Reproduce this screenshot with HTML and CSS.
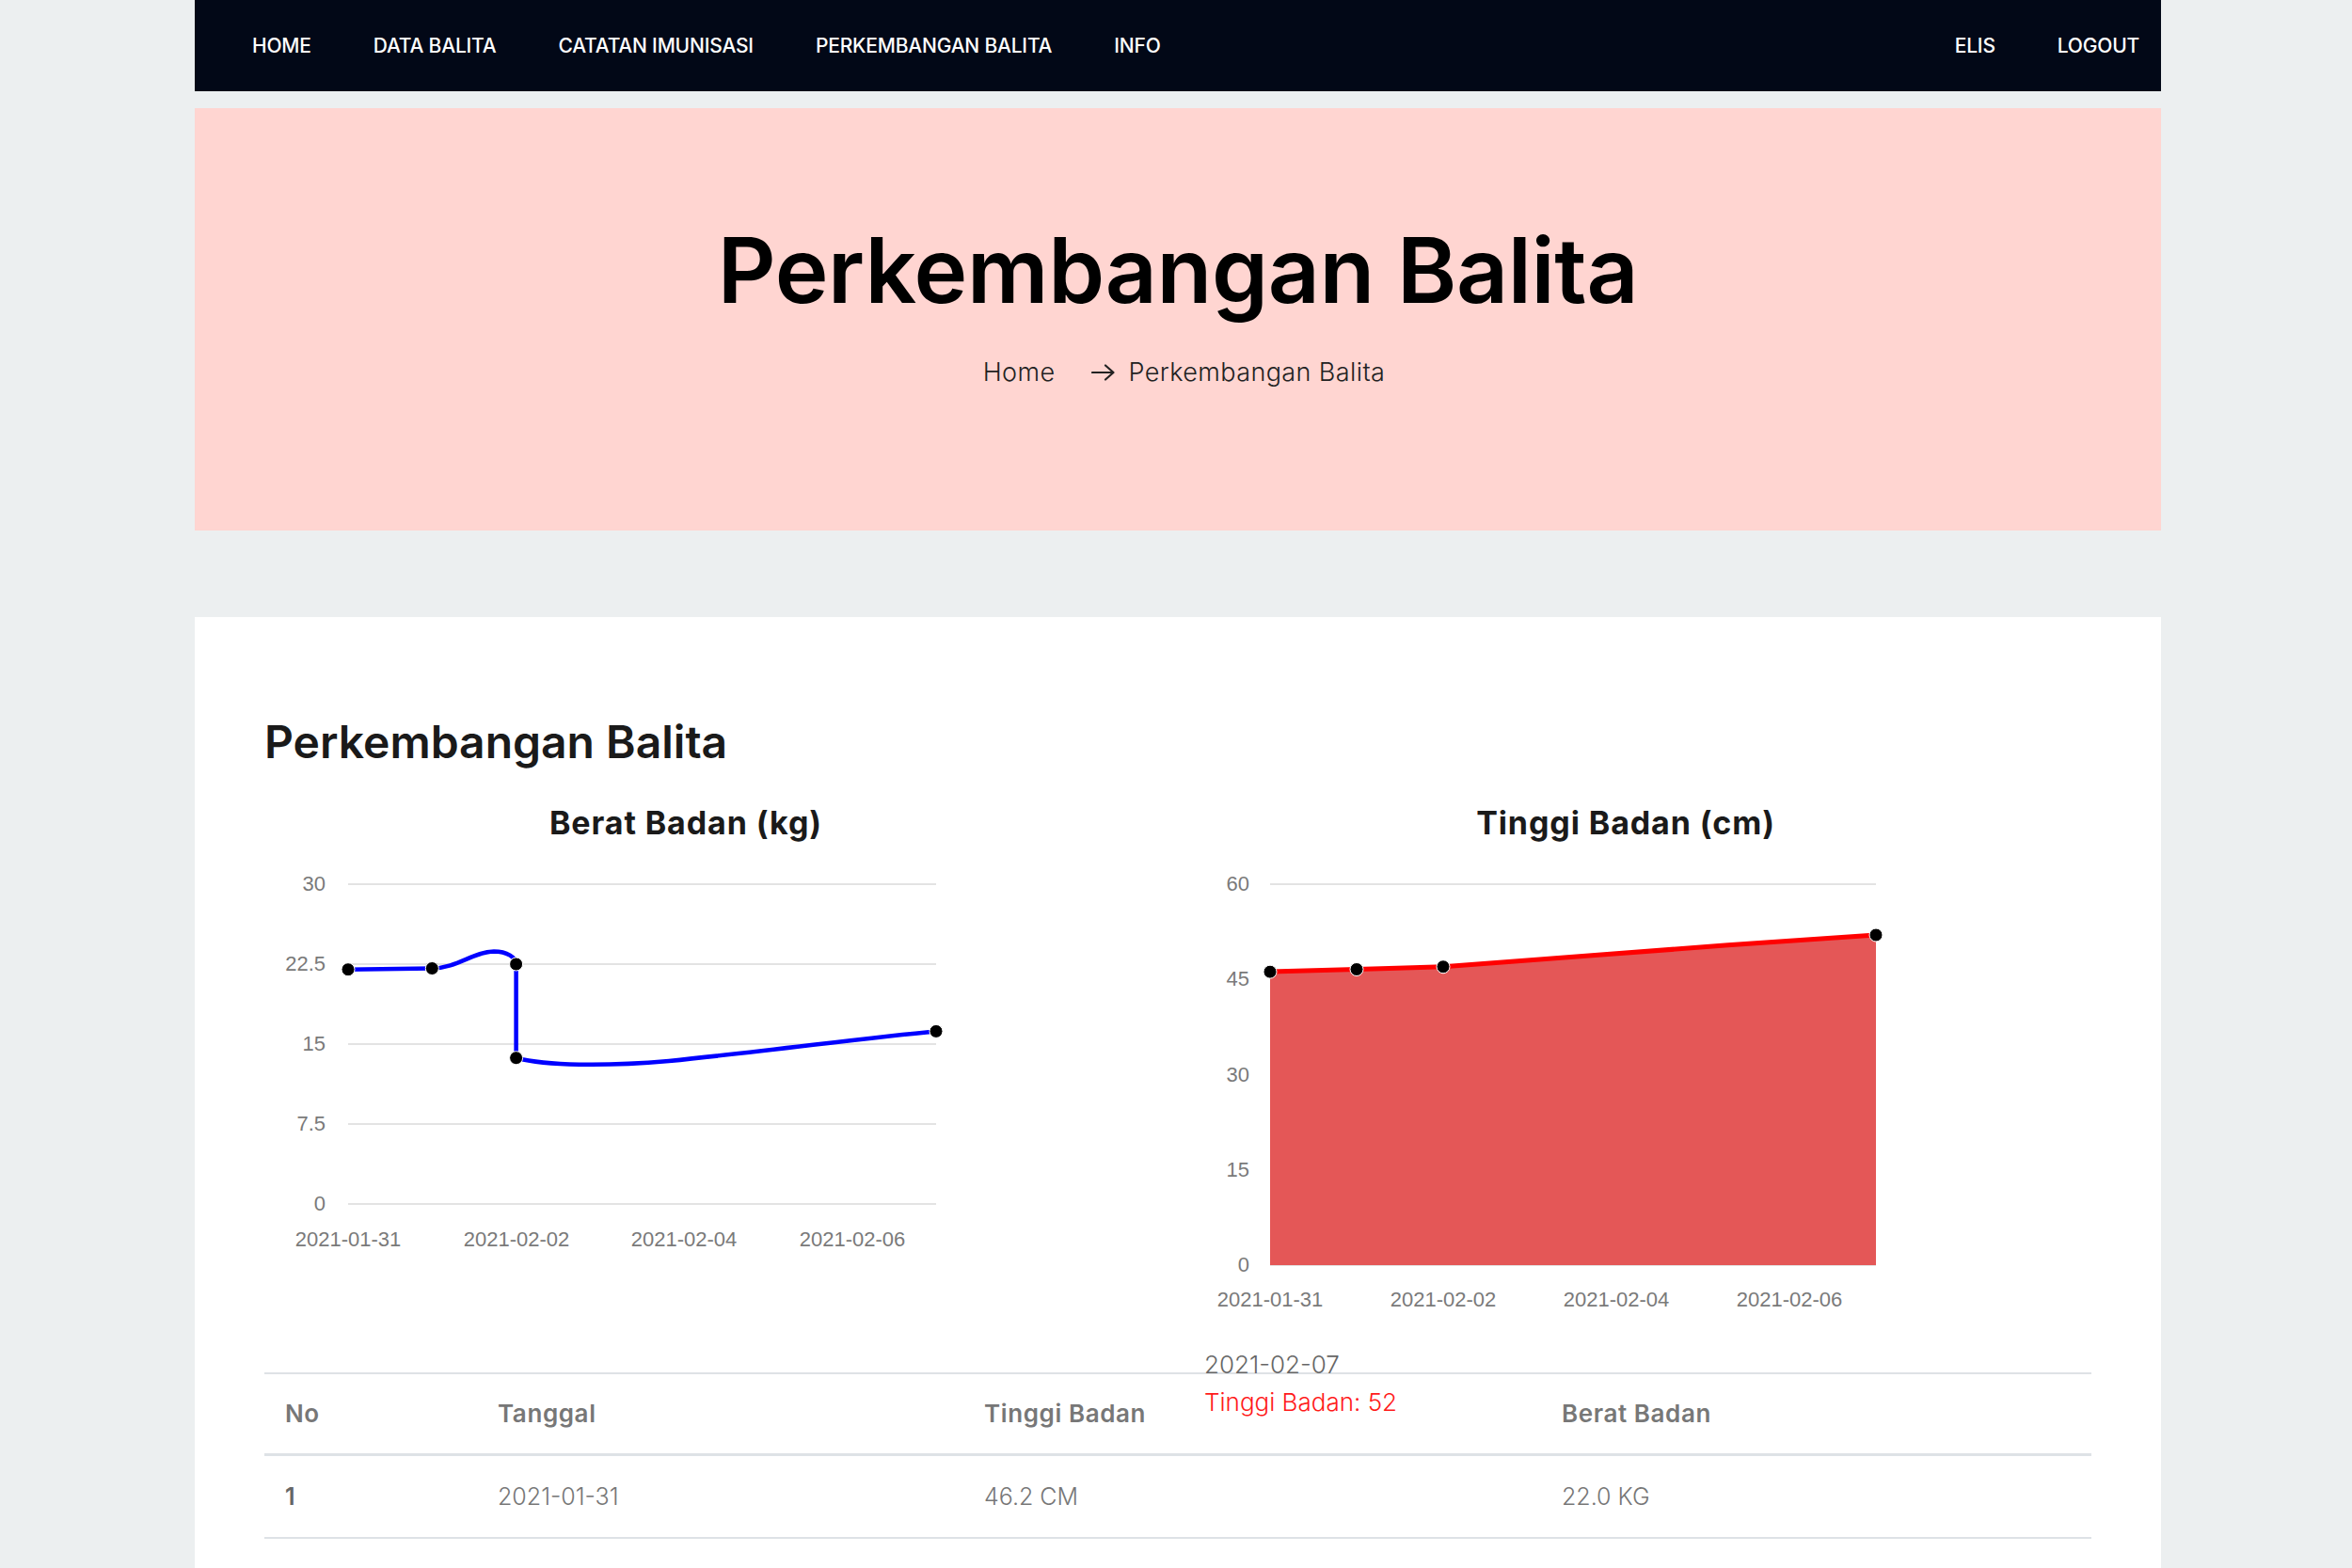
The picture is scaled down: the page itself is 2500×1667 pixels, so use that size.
FILE: index.html
```html
<!DOCTYPE html>
<html lang="id">
<head>
<meta charset="utf-8">
<title>Perkembangan Balita</title>
<link rel="stylesheet" href="styles.css">
</head>
<body>
<div class="page">
  <nav class="navbar">
    <ul class="nav-left">
      <li>HOME</li>
      <li>DATA BALITA</li>
      <li>CATATAN IMUNISASI</li>
      <li>PERKEMBANGAN BALITA</li>
      <li>INFO</li>
    </ul>
    <ul class="nav-right">
      <li>ELIS</li>
      <li>LOGOUT</li>
    </ul>
  </nav>

  <header class="hero">
    <h1 class="hero-title">Perkembangan Balita</h1>
    <div class="crumbs">
      <span class="crumb">Home</span>
      <svg class="crumb-arrow" width="26" height="18" viewBox="0 0 26 18"><path d="M1 9 H23 M15 1.5 L23.5 9 L15 16.5" fill="none" stroke="#222" stroke-width="2.2" stroke-linecap="round" stroke-linejoin="round"/></svg>
      <span class="crumb">Perkembangan Balita</span>
    </div>
  </header>

  <section class="card">
    <h3 class="card-title">Perkembangan Balita</h3>
    <div class="charts">
      <div class="chart">
        <h4 class="chart-title">Berat Badan (kg)</h4>
        <svg class="chart-svg" width="896" height="450" viewBox="0 0 896 450">
          <g class="grid">
            <line x1="89" y1="47" x2="714" y2="47"/>
            <line x1="89" y1="132" x2="714" y2="132"/>
            <line x1="89" y1="217" x2="714" y2="217"/>
            <line x1="89" y1="302" x2="714" y2="302"/>
            <line x1="89" y1="387" x2="714" y2="387"/>
          </g>
          <g class="ylab">
            <text x="65" y="54">30</text>
            <text x="65" y="139">22.5</text>
            <text x="65" y="224">15</text>
            <text x="65" y="309">7.5</text>
            <text x="65" y="394">0</text>
          </g>
          <g class="xlab">
            <text x="89" y="432">2021-01-31</text>
            <text x="268" y="432">2021-02-02</text>
            <text x="446" y="432">2021-02-04</text>
            <text x="625" y="432">2021-02-06</text>
          </g>
          <path class="line-blue" d="M89,137.7 C120,137.5 150,137 178.3,136.5 C205,136 222,119 244,118.5 C258,118.5 267.6,125 267.6,132 L267.6,231.7 C300,240 360,241 430,235 C540,224 640,210 714,203.4"/>
          <g class="dots">
            <circle cx="89" cy="137.7" r="7"/>
            <circle cx="178.3" cy="136.5" r="7"/>
            <circle cx="267.6" cy="132" r="7"/>
            <circle cx="267.6" cy="231.7" r="7"/>
            <circle cx="714" cy="203.4" r="7"/>
          </g>
        </svg>
      </div>
      <div class="chart">
        <h4 class="chart-title">Tinggi Badan (cm)</h4>
        <svg class="chart-svg" width="896" height="510" viewBox="0 0 896 510">
          <g class="grid">
            <line x1="70" y1="47" x2="714" y2="47"/>
            <line x1="70" y1="148.25" x2="714" y2="148.25"/>
            <line x1="70" y1="249.5" x2="714" y2="249.5"/>
            <line x1="70" y1="350.75" x2="714" y2="350.75"/>
            <line x1="70" y1="452" x2="714" y2="452"/>
          </g>
          <g class="ylab">
            <text x="48" y="54">60</text>
            <text x="48" y="155">45</text>
            <text x="48" y="257">30</text>
            <text x="48" y="358">15</text>
            <text x="48" y="459">0</text>
          </g>
          <g class="xlab">
            <text x="70" y="496">2021-01-31</text>
            <text x="254" y="496">2021-02-02</text>
            <text x="438" y="496">2021-02-04</text>
            <text x="622" y="496">2021-02-06</text>
          </g>
          <path class="area-red" d="M70,452 L70,140.15 C100,139 130,138.3 162,137.5 C195,136.7 220,136 254,134.75 C420,122 560,111 714,101 L714,452 Z"/>
          <path class="line-red" d="M70,140.15 C100,139 130,138.3 162,137.5 C195,136.7 220,136 254,134.75 C420,122 560,111 714,101"/>
          <g class="dots">
            <circle cx="70" cy="140.15" r="7"/>
            <circle cx="162" cy="137.5" r="7"/>
            <circle cx="254" cy="134.75" r="7"/>
            <circle cx="714" cy="101" r="7"/>
          </g>
        </svg>
        <div class="tooltip">
          <div class="tip-date">2021-02-07</div>
          <div class="tip-value">Tinggi Badan: 52</div>
        </div>
      </div>
    </div>

    <table class="data-table">
      <thead>
        <tr>
          <th class="c-no">No</th>
          <th class="c-date">Tanggal</th>
          <th class="c-tb">Tinggi Badan</th>
          <th class="c-bb">Berat Badan</th>
        </tr>
      </thead>
      <tbody>
        <tr><td class="num">1</td><td>2021-01-31</td><td>46.2 CM</td><td>22.0 KG</td></tr>
        <tr><td class="num">2</td><td>2021-02-01</td><td>46.6 CM</td><td>22.1 KG</td></tr>
        <tr><td class="num">3</td><td>2021-02-02</td><td>47.0 CM</td><td>22.5 KG</td></tr>
        <tr><td class="num">4</td><td>2021-02-02</td><td>47.0 CM</td><td>13.7 KG</td></tr>
        <tr><td class="num">5</td><td>2021-02-07</td><td>52.0 CM</td><td>16.2 KG</td></tr>
      </tbody>
    </table>
  </section>
</div>
</body>
</html>
```

FILE: styles.css
```css
* { box-sizing: border-box; }

html, body {
  margin: 0;
  padding: 0;
  background: #ECEFF0;
  font-family: "Inter", "Open Sans", sans-serif;
}

.page {
  width: 2090px;
  margin: 0 0 0 207px;
}

/* NAVBAR */
.navbar {
  height: 97px;
  background: #020817;
  display: flex;
  align-items: center;
  justify-content: space-between;
  padding: 0 23px 0 61px;
}

.nav-left, .nav-right {
  list-style: none;
  margin: 0;
  padding: 0;
  display: flex;
  gap: 66px;
}

.nav-left li, .nav-right li {
  color: #ffffff;
  font-size: 21px;
  font-weight: 500;
  letter-spacing: -0.2px;
  line-height: 1;
}

/* HERO */
.hero {
  margin-top: 18px;
  height: 449px;
  background: #FFD5D1;
  display: flex;
  flex-direction: column;
  align-items: center;
  padding-top: 124px;
}

.hero-title {
  margin: 0;
  font-size: 96px;
  font-weight: 600;
  line-height: 96px;
  color: #000;
  letter-spacing: -0.3px;
}

.crumbs {
  margin-top: 45px;
  padding-left: 13px;
  display: flex;
  align-items: center;
  gap: 14px;
}

.crumb {
  font-size: 27px;
  font-weight: 300;
  line-height: 32px;
  color: #222;
  letter-spacing: 0.4px;
}

.crumb-arrow {
  margin-left: 24px;
}

/* CARD */
.card {
  margin-top: 92px;
  background: #ffffff;
  padding: 104px 74px 60px;
}

.card-title {
  margin: 0;
  font-size: 48px;
  font-weight: 600;
  line-height: 58px;
  color: #1a1a1a;
  letter-spacing: 0;
}

.charts {
  margin-top: 39px;
  display: grid;
  grid-template-columns: 1fr 1fr;
  column-gap: 56px;
}

.chart {
  position: relative;
}

.chart-title {
  width: 896px;
  margin: 0;
  text-align: center;
  font-size: 34px;
  font-weight: 700;
  line-height: 36px;
  color: #1a1a1a;
  letter-spacing: 0.9px;
}

.chart-svg {
  display: block;
}

.grid line {
  stroke: #e3e3e3;
  stroke-width: 2;
}

.ylab text, .xlab text {
  font-family: "Liberation Sans", Arial, sans-serif;
  font-size: 22px;
  fill: #7a7a7a;
}

.ylab text { text-anchor: end; }
.xlab text { text-anchor: middle; }

.line-blue {
  fill: none;
  stroke: #0000ff;
  stroke-width: 4.5;
}

.area-red {
  fill: #E45757;
}

.line-red {
  fill: none;
  stroke: #ff0000;
  stroke-width: 5;
}

.dots circle {
  fill: #000;
  stroke: #fff;
  stroke-width: 1;
}

.tooltip {
  position: absolute;
  left: 0;
  top: 574px;
  font-size: 26px;
  font-weight: 300;
  line-height: 40px;
}

.tip-date { color: #666; }
.tip-value { color: #ff1a1a; }

/* TABLE */
.data-table {
  margin-top: 56px;
  width: 100%;
  border-collapse: collapse;
  table-layout: fixed;
}

.data-table th, .data-table td {
  text-align: left;
  padding: 24px 22px;
  font-size: 25px;
  line-height: 38px;
  color: #777;
  border-top: 2px solid #dee2e6;
}

.data-table th {
  padding: 23px 22px;
  font-size: 26px;
  font-weight: 600;
  letter-spacing: 0.6px;
  border-bottom: 3px solid #dee2e6;
}

.data-table td {
  font-weight: 300;
}

.data-table td.num {
  font-weight: 600;
  color: #666;
}

.c-no { width: 226px; }
.c-date { width: 517px; }
.c-tb { width: 614px; }
.c-bb { width: auto; }
```
